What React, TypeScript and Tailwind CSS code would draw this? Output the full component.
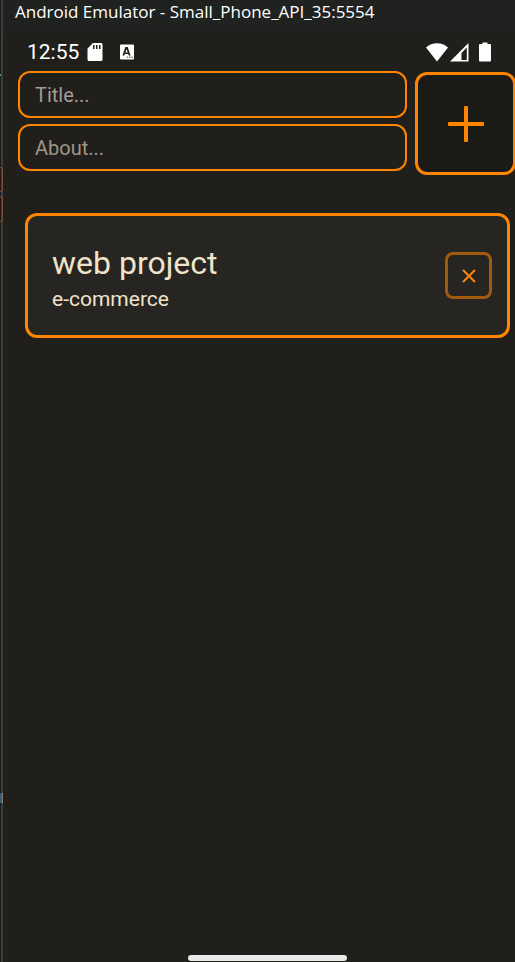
import React, { useState } from "react";

function StatusBar() {
  return (
    <div className="flex h-[38px] items-center pl-6 pr-6 text-white">
      <span className="text-[21px] leading-9">12:55</span>
      <svg className="ml-2 h-5 w-4" viewBox="0 0 16 20" aria-label="SD card">
        <path
          fill="currentColor"
          fillRule="evenodd"
          d="M6 1h8a1.500 1.500 0 0 1 1.500 1.500v15a1.500 1.500 0 0 1-1.500 1.500H2A1.500 1.500 0 0 1 .5 17.500V6.500zM6 3v4h1.500V3zM9 3v4h1.500V3zM12 3v4h1.500V3z"
        />
      </svg>
      <svg className="ml-4 h-4 w-4" viewBox="0 0 15 16" aria-label="Keyboard">
        <rect x="0.500" y="0.500" width="14" height="15" rx="1" fill="currentColor" />
        <path
          fill="#201f1b"
          fillRule="evenodd"
          d="M5.800 3h2.400L11 11.500H9.200l-.5-1.500H5.300L4.800 11.500H3zM7 5.300 5.800 8.500h2.400z"
        />
        <path stroke="#201f1b" strokeDasharray="1.200 1" d="M7.500 13.200h6" />
      </svg>
      <div className="ml-auto flex items-center">
        <svg className="h-5 w-[22px]" viewBox="0 0 22 20" aria-label="Wi-Fi">
          <path fill="currentColor" d="M0 5.500C5.500-.2 16.500-.2 22 5.500L11 19.500z" />
        </svg>
        <svg className="ml-0.5 h-5 w-[19px]" viewBox="0 0 19 20" aria-label="Mobile signal">
          <path fill="currentColor" fillRule="evenodd" d="M18.500 1v18.500H0zM16.800 5.500 11.500 11v7h5.300z" />
        </svg>
        <svg className="ml-2.5 h-5 w-3" viewBox="0 0 12 20" aria-label="Battery">
          <path
            fill="currentColor"
            d="M3.500.5h5v1.500H11a1 1 0 0 1 1 1v15.500a1 1 0 0 1-1 1H1a1 1 0 0 1-1-1V3a1 1 0 0 1 1-1h2.500z"
          />
        </svg>
      </div>
    </div>
  );
}

const fieldClass =
  "h-[47px] w-full rounded-xl border-2 border-[#ff8500] bg-transparent px-[15px] text-xl outline-none text-[#f0e3ca]";

function ProjectForm() {
  return (
    <form className="-mr-px flex gap-2 pl-[15px]" onSubmit={(e) => e.preventDefault()}>
      <div className="flex min-w-0 flex-1 flex-col gap-1.5">
        <input className={`${fieldClass} placeholder:text-[#a09d99]`} placeholder="Title..." aria-label="Title" />
        <input className={`${fieldClass} placeholder:text-[#a09686]`} placeholder="About..." aria-label="About" />
      </div>
      <button
        type="submit"
        aria-label="Add project"
        className="mt-px flex h-[103px] w-[101px] shrink-0 items-center justify-center rounded-xl border-3 border-[#ff8500] bg-[#1b1a17] text-[#ff8500]"
      >
        <svg className="size-9" viewBox="0 0 36 36" fill="currentColor">
          <rect x="16" y="0" width="4" height="36" rx="1" />
          <rect x="0" y="16" width="36" height="4" rx="1" />
        </svg>
      </button>
    </form>
  );
}

type Project = { title: string; about: string };

function ProjectCard({ project, onRemove }: { project: Project; onRemove: () => void }) {
  return (
    <article className="flex items-center justify-between rounded-xl border-3 border-[#ff8500] bg-[#262521] py-6 pl-6 pr-[15px] text-[#f0e3ca]">
      <div>
        <h2 className="text-[32px] leading-[47px]">{project.title}</h2>
        <p className="text-[21px] leading-6">{project.about}</p>
      </div>
      <button
        type="button"
        aria-label="Remove project"
        onClick={onRemove}
        className="flex size-[47px] items-center justify-center rounded-lg border-3 border-[#a3590c] text-[#ff8500]"
      >
        <svg className="size-3.5" viewBox="0 0 14 14" stroke="currentColor" strokeWidth="2">
          <path d="M1 1l12 12M13 1L1 13" />
        </svg>
      </button>
    </article>
  );
}

export default function App() {
  const [projects, setProjects] = useState<Project[]>([{ title: "web project", about: "e-commerce" }]);

  return (
    <div className="relative flex min-h-screen flex-col overflow-hidden bg-[#201f1b] font-['Roboto',sans-serif]">
      <header className="h-[33px] bg-[#202220] pl-[15px] font-['Open_Sans',sans-serif] text-[17px] leading-6 text-white">
        Android Emulator - Small_Phone_API_35:5554
      </header>
      <main className="flex flex-1 flex-col pl-[3px]">
        <StatusBar />
        <ProjectForm />
        <section className="mt-[38px] flex flex-col gap-4 pl-[22px] pr-[5px]">
          {projects.map((project) => (
            <ProjectCard
              key={project.title}
              project={project}
              onRemove={() => setProjects(projects.filter((p) => p !== project))}
            />
          ))}
        </section>
        <div className="mb-px mt-auto ml-[185px] h-1.5 w-[159px] rounded-full bg-[#ebe9ea]" />
      </main>
      <div className="absolute inset-y-0 left-0 w-[3px] border-r-2 border-[#3d3d3d] bg-[#1b1b1d]">
        <div className="absolute top-[74px] h-0.5 w-px bg-[#4f9c8c]" />
        <div className="absolute top-[167px] h-[25px] w-[3px] rounded-r border border-l-0 border-[#80502a]" />
        <div className="absolute top-[196px] h-[26px] w-[3px] rounded-r border border-l-0 border-[#80502a]" />
        <div className="absolute top-[793px] flex h-2.5 w-[3px]">
          <div className="w-0.5 bg-[#26658a]" />
          <div className="w-px shrink-0 bg-[#a07a58]" />
        </div>
      </div>
    </div>
  );
}
